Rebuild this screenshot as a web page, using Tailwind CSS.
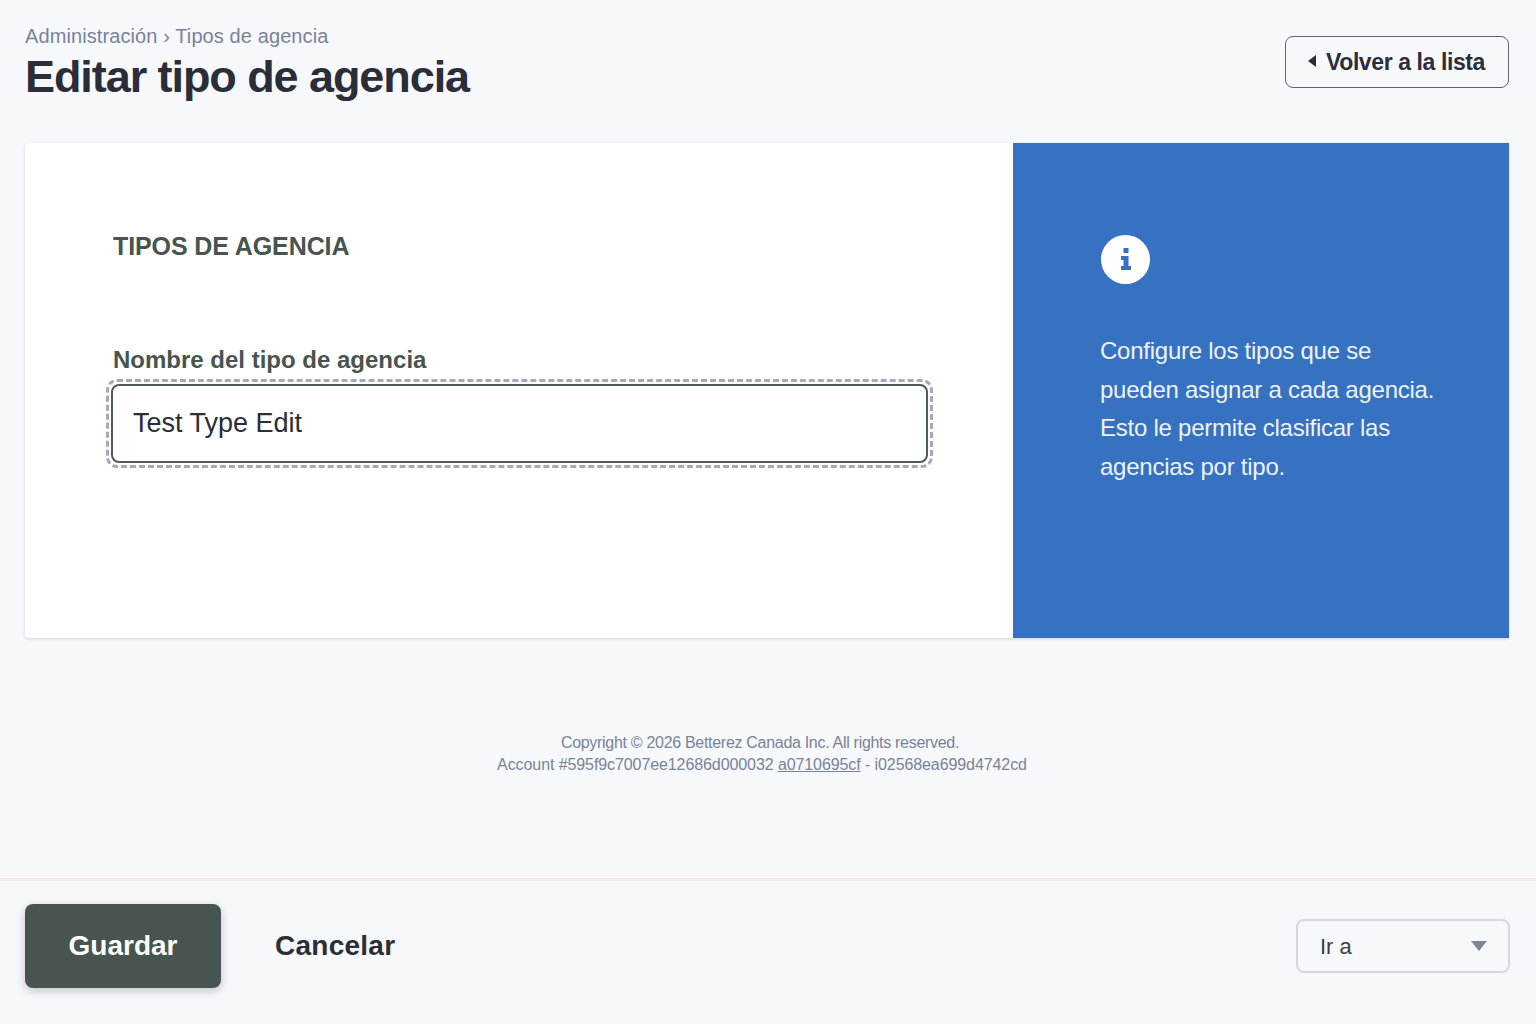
<!DOCTYPE html>
<html lang="es">
<head>
    <meta charset="UTF-8">
    <title>Editar tipo de agencia</title>
    <script src="https://cdn.jsdelivr.net/npm/@tailwindcss/browser@4"></script>
</head>
<body class="bg-[#f7f8fb] h-screen flex flex-col overflow-hidden font-['Liberation_Sans',Arial,sans-serif]">
    <main class="h-[878px] pl-[25px] pr-[27px] pt-[22px]">
        <!-- Header -->
        <header class="flex justify-between items-start h-[121px]">
            <div>
                <p class="text-[20px] leading-[28px] tracking-[0.1px] text-[#78839a]">Administración › Tipos de agencia</p>
                <h1 class="text-[45px] leading-[54px] font-bold tracking-[-1.07px] text-[#2b2e38]">Editar tipo de agencia</h1>
            </div>
            <a class="mt-[14px] w-[224px] h-[52px] pl-[22px] flex items-center gap-[10px] border border-[#5a6578] rounded-lg text-[23px] font-bold tracking-[-0.4px] text-[#2b2e38]">
                <svg width="8" height="12" viewBox="0 0 8 12" class="-mt-[2px]"><path d="M8 0v12L0 6z" fill="#2b2e38"/></svg>
                Volver a la lista
            </a>
        </header>

        <!-- Card -->
        <section class="flex h-[495px] rounded-l-[4px] bg-white shadow-[0_1px_3px_rgba(30,40,60,0.18)] overflow-hidden">
            <div class="w-[988px] pl-[88px] pr-[80px] pt-[87px]">
                <h2 class="text-[25px] leading-[32px] font-bold tracking-[-0.1px] text-[#47544f]">TIPOS DE AGENCIA</h2>
                <label class="block mt-[82px] text-[24px] leading-[32px] font-bold text-[#47544f]">Nombre del tipo de agencia</label>
                <div class="mt-[3px] -ml-[7px] p-[2px] border-[3px] border-dashed border-[#a3abb9] rounded-[11px]">
                    <input value="Test Type Edit" class="w-full h-[79px] px-[20px] border-2 border-[#4f5a5c] rounded-lg bg-white text-[27px] text-[#2b2e38] outline-none">
                </div>
            </div>
            <aside class="flex-1 bg-[#3771c1] pl-[87px] pr-[60px] pt-[92px] text-white">
                <div class="w-[49px] h-[49px] ml-[1px] rounded-full bg-white flex items-center justify-center">
                    <svg width="12" height="22" viewBox="0 0 12 22" fill="#3771c1" class="-mt-[1px]"><rect x="3.5" y="0" width="5" height="5"/><path d="M1 8h7.5v10H11v4H1v-4h2.5v-6H1z"/></svg>
                </div>
                <p class="mt-[48px] text-[24px] leading-[38.5px] tracking-[-0.25px] text-[#edf3fb]">Configure los tipos que se pueden asignar a cada agencia. Esto le permite clasificar las agencias por tipo.</p>
            </aside>
        </section>

        <!-- Copyright -->
        <footer class="mt-[94px] w-[1474px] text-center text-[16px] leading-[22px] text-[#78839a]">
            <p class="tracking-[-0.3px] -translate-x-[2px]">Copyright © 2026 Betterez Canada Inc. All rights reserved.</p>
            <p class="tracking-[-0.09px]">Account #595f9c7007ee12686d000032 <a class="underline">a0710695cf</a> - i02568ea699d4742cd</p>
        </footer>
    </main>

    <!-- Action bar -->
    <div class="flex-1 border-t-[3px] border-[#f8ebe0] pl-[25px] pr-[26px] flex items-center justify-between pb-[13px]">
        <div class="flex items-center">
            <button class="w-[196px] h-[84px] rounded-lg bg-[#47544f] text-white text-[28px] font-bold shadow-[0_3px_8px_rgba(30,40,60,0.25)]">Guardar</button>
            <button class="ml-[54px] text-[28px] font-bold tracking-[0.25px] text-[#2b2e38]">Cancelar</button>
        </div>
        <div class="w-[214px] h-[54px] pl-[22px] pr-[21px] flex items-center justify-between border-2 border-[#d3d8e1] rounded-lg text-[22px] text-[#3a3d46]">
            <span>Ir a</span>
            <svg width="16" height="10" viewBox="0 0 16 10"><path d="M0 0h16L8 10z" fill="#7c8699"/></svg>
        </div>
    </div>
</body>
</html>
